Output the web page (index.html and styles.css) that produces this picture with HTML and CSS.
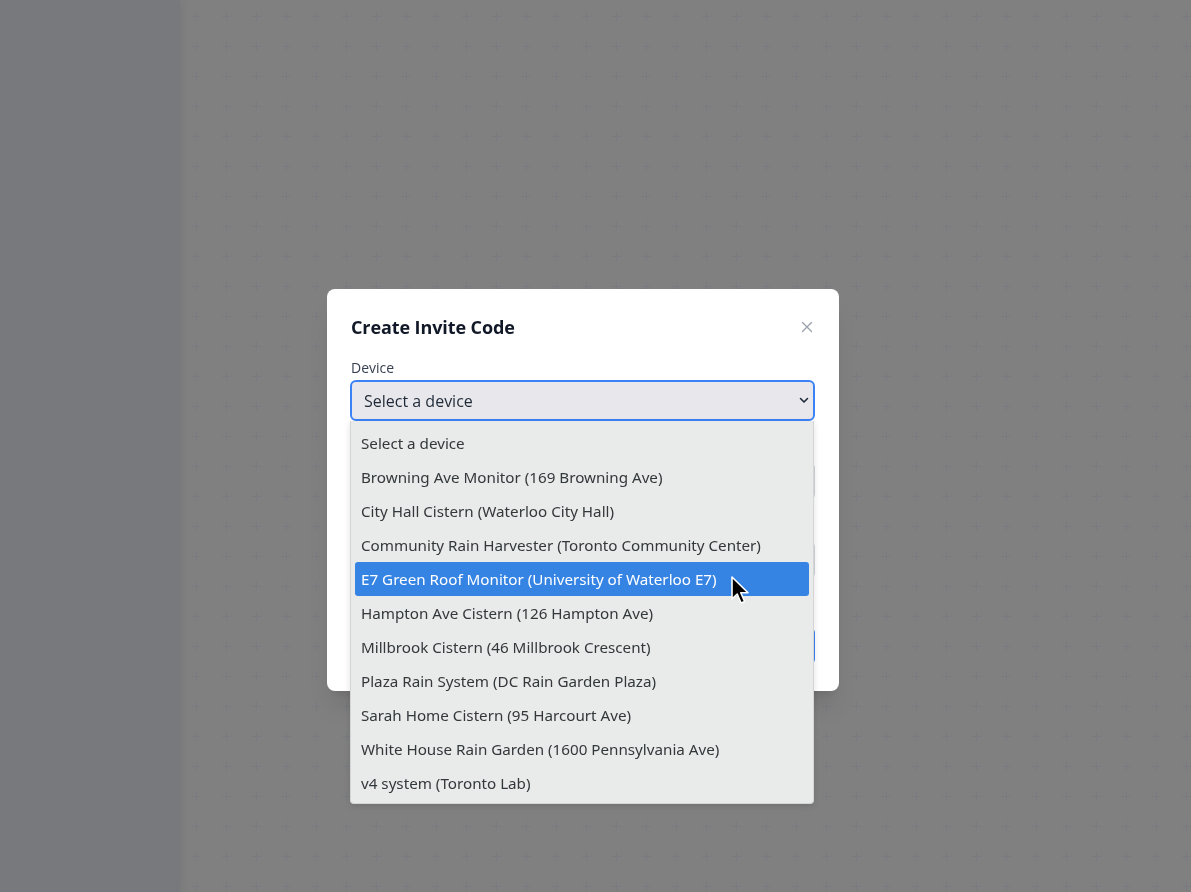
FILE: index.html
```html
<!DOCTYPE html>
<html lang="en">
<head>
<meta charset="utf-8">
<title>Create Invite Code</title>
<link rel="stylesheet" href="styles.css">
</head>
<body>
<div class="app">
  <aside class="sidebar"></aside>
  <main class="main">
    <svg class="grid" width="100%" height="100%" aria-hidden="true">
      <defs>
        <pattern id="plus" x="181" y="1" width="30" height="30" patternUnits="userSpaceOnUse">
          <path d="M11 15.5H20M15.5 11V20" stroke="#797b80" stroke-width="1"/>
        </pattern>
      </defs>
      <rect x="0" y="0" width="100%" height="100%" fill="url(#plus)"/>
    </svg>
  </main>
</div>

<div class="overlay">
  <div class="modal">
    <div class="modal-header">
      <h2 class="modal-title">Create Invite Code</h2>
      <button class="close" aria-label="Close">
        <svg width="12" height="12" viewBox="0 0 12 12"><path d="M1.5 1.5L10.5 10.5M10.5 1.5L1.5 10.5" stroke="#9ca3af" stroke-width="1.4" stroke-linecap="round"/></svg>
      </button>
    </div>

    <div class="field">
      <label class="label">Device</label>
      <div class="select">
        <span>Select a device</span>
        <svg width="10" height="7" viewBox="0 0 10 7"><path d="M1.5 1.5L5 5L8.5 1.5" stroke="#1f2937" stroke-width="1.6" fill="none" stroke-linecap="round" stroke-linejoin="round"/></svg>
      </div>
    </div>

    <div class="field">
      <div class="label-space"></div>
      <div class="input"></div>
    </div>

    <div class="field">
      <div class="label-space"></div>
      <div class="input"></div>
    </div>

    <div class="actions">
      <div class="btn btn-secondary"></div>
      <div class="btn btn-primary"></div>
    </div>

    <ul class="dropdown">
      <li class="option">Select a device</li>
      <li class="option">Browning Ave Monitor (169 Browning Ave)</li>
      <li class="option">City Hall Cistern (Waterloo City Hall)</li>
      <li class="option">Community Rain Harvester (Toronto Community Center)</li>
      <li class="option selected">E7 Green Roof Monitor (University of Waterloo E7)</li>
      <li class="option">Hampton Ave Cistern (126 Hampton Ave)</li>
      <li class="option">Millbrook Cistern (46 Millbrook Crescent)</li>
      <li class="option">Plaza Rain System (DC Rain Garden Plaza)</li>
      <li class="option">Sarah Home Cistern (95 Harcourt Ave)</li>
      <li class="option">White House Rain Garden (1600 Pennsylvania Ave)</li>
      <li class="option">v4 system (Toronto Lab)</li>
    </ul>

    <svg class="cursor" width="20" height="30" viewBox="0 0 20 30" aria-hidden="true">
      <path d="M1 1V23L6.2 18L10 27L13.6 25.5L9.8 16.8H17Z" fill="#000" stroke="#fff" stroke-width="1.6" stroke-linejoin="round"/>
    </svg>
  </div>
</div>
</body>
</html>
```

FILE: styles.css
```css
* { box-sizing: border-box; }

html, body {
  margin: 0;
  padding: 0;
  width: 1191px;
  height: 892px;
  overflow: hidden;
}

body {
  font-family: "Open Sans", "Noto Sans", sans-serif;
  background: #808080;
}

.app {
  display: flex;
  height: 892px;
}

.sidebar {
  width: 180px;
  flex: none;
  background: #78797d;
  box-shadow: 2px 0 8px rgba(0, 0, 0, 0.06);
  position: relative;
  z-index: 1;
}

.main {
  flex: 1;
  background: #808080;
}

.grid {
  display: block;
}

.overlay {
  position: fixed;
  inset: 0;
  padding: 289px 0 0 327px;
}

.modal {
  position: relative;
  width: 512px;
  height: 402px;
  background: #ffffff;
  border-radius: 8px;
  padding: 24px 24px 24px 23px;
  box-shadow: 0 20px 25px -5px rgba(0,0,0,0.1), 0 8px 10px -6px rgba(0,0,0,0.1);
}

.modal-header {
  display: flex;
  align-items: center;
  justify-content: space-between;
  height: 28px;
  margin-bottom: 17px;
  padding-left: 1px;
}

.modal-title {
  margin: 0;
  font-size: 18px;
  line-height: 28px;
  font-weight: 700;
  color: #111827;
  letter-spacing: -0.1px;
}

.close {
  border: 0;
  background: none;
  padding: 0;
  margin-right: 2px;
  width: 12px;
  height: 12px;
  display: flex;
}

.field {
  display: flex;
  flex-direction: column;
}

.field + .field {
  margin-top: 16px;
}

.label {
  font-size: 14px;
  line-height: 20px;
  font-weight: 500;
  color: #374151;
  margin-bottom: 2px;
  padding-left: 1px;
}

.label-space {
  height: 20px;
  margin-bottom: 5px;
}

.select {
  height: 41px;
  border: 2px solid #3b82f6;
  border-radius: 6px;
  background: #e8e8ec;
  display: flex;
  align-items: center;
  justify-content: space-between;
  padding: 0 4px 0 12px;
  font-size: 16px;
  color: #1f2937;
}

.input {
  height: 38px;
  border: 1px solid #d1d5db;
  border-radius: 6px;
  background: #fff;
}

.actions {
  display: flex;
  justify-content: flex-end;
  gap: 12px;
  margin-top: 48px;
}

.btn {
  height: 38px;
  border-radius: 6px;
}

.btn-secondary {
  width: 84px;
  background: #fff;
  border: 1px solid #d1d5db;
}

.btn-primary {
  width: 120px;
  background: #3b82f6;
}

.dropdown {
  position: absolute;
  left: 23px;
  top: 132px;
  width: 464px;
  height: 383px;
  margin: 0;
  padding: 5px 4px 4px 4px;
  list-style: none;
  background: #e9eaea;
  border: 1px solid #d4d5d5;
  border-top: 0;
  border-radius: 0 0 4px 4px;
  box-shadow: 0 2px 6px rgba(0, 0, 0, 0.12);
  font-family: "Noto Sans", sans-serif;
  font-size: 15.2px;
  color: #33383a;
}

.option {
  height: 34px;
  line-height: 34px;
  padding-left: 6px;
  border-radius: 3px;
  white-space: nowrap;
}

.option.selected {
  background: #3584e4;
  color: #ffffff;
}

.cursor {
  position: absolute;
  left: 404px;
  top: 287px;
}
```
